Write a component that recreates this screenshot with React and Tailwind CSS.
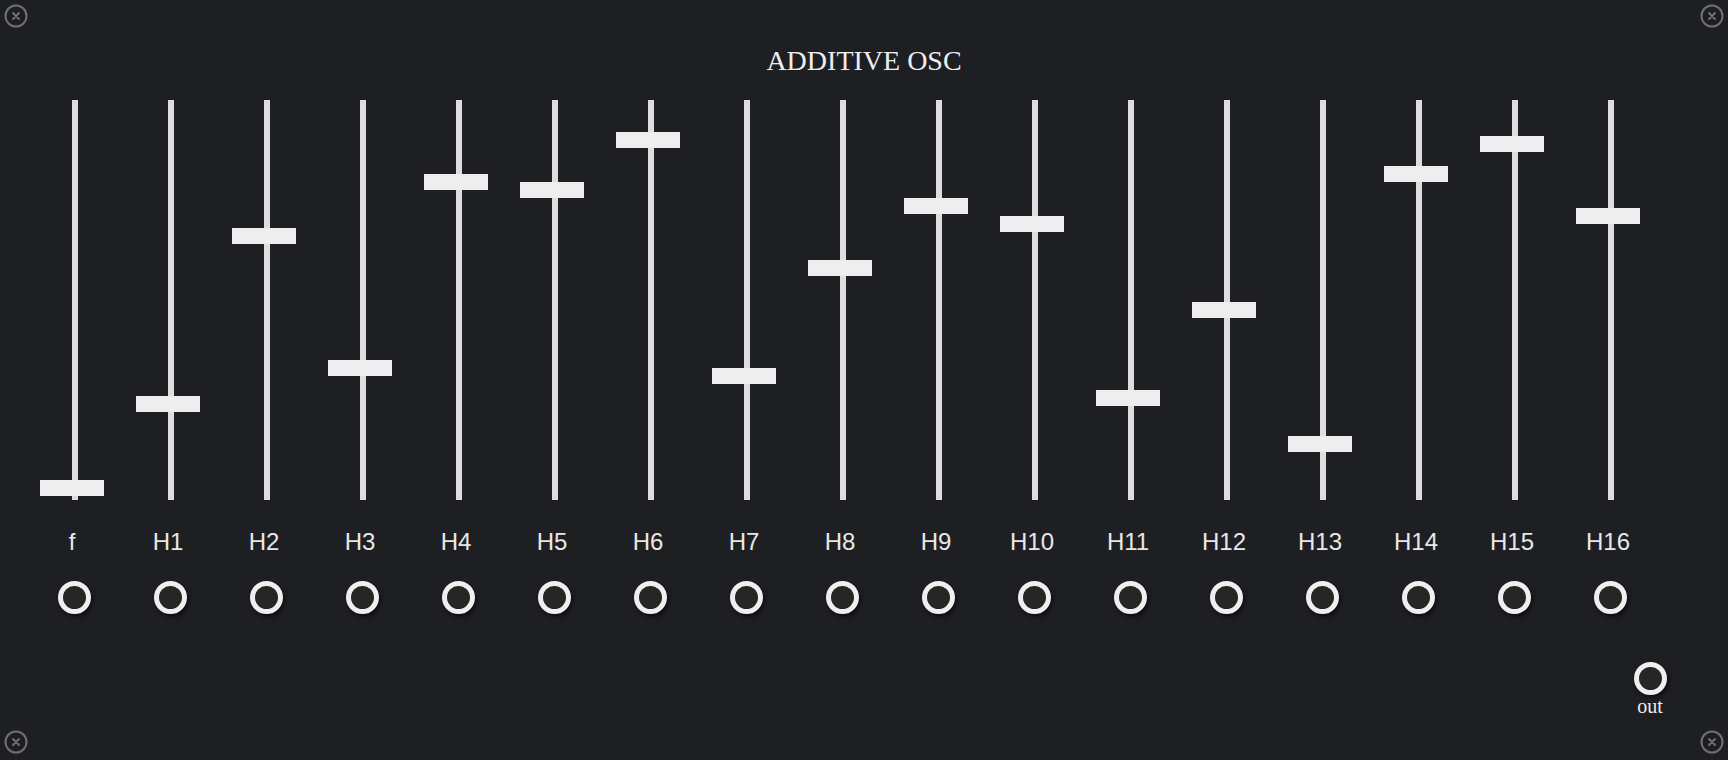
import React from "react";

// thumb top offsets (px from top of the 400px track)
const sliders = [
    { label: "f", top: 380 },
    { label: "H1", top: 296 },
    { label: "H2", top: 128 },
    { label: "H3", top: 260 },
    { label: "H4", top: 74 },
    { label: "H5", top: 82 },
    { label: "H6", top: 32 },
    { label: "H7", top: 268 },
    { label: "H8", top: 160 },
    { label: "H9", top: 98 },
    { label: "H10", top: 116 },
    { label: "H11", top: 290 },
    { label: "H12", top: 202 },
    { label: "H13", top: 336 },
    { label: "H14", top: 66 },
    { label: "H15", top: 36 },
    { label: "H16", top: 108 },
];

function CloseButton({ className }) {
    return (
        <button className={`absolute w-6 h-6 ${className}`}>
            <svg viewBox="0 0 24 24" width="24" height="24">
                <circle cx="12" cy="12" r="10.5" fill="none" stroke="#6f7073" strokeWidth="2" />
                <path d="M9 9 L15 15 M15 9 L9 15" stroke="#6f7073" strokeWidth="2" strokeLinecap="round" />
            </svg>
        </button>
    );
}

function Jack() {
    return (
        <div className="w-[33px] h-[33px] rounded-full border-[5.5px] border-[#efefef] bg-[#272625] shadow-[2px_3px_4px_rgba(0,0,0,0.55)]" />
    );
}

function Slider({ label, top }) {
    return (
        <div className="w-[96px] flex flex-col items-center">
            <div className="relative w-full h-[400px]">
                <div className="absolute left-[48px] top-0 w-[6px] h-full bg-[#dedede]" />
                <div
                    className="absolute left-[16px] w-[64px] h-[16px] bg-[#eeeeee]"
                    style={{ top }}
                />
            </div>
            <div className="mt-[28px] h-[28px] leading-[28px] text-[24px] text-[#e8e8e8] font-['Liberation_Sans',Arial,sans-serif]">
                {label}
            </div>
            <div className="mt-[25px] pl-1">
                <Jack />
            </div>
        </div>
    );
}

export default function App() {
    return (
        <div className="relative w-full h-[760px] bg-[#1e1f23] overflow-hidden">
            <CloseButton className="left-1 top-1" />
            <CloseButton className="right-1 top-1" />
            <CloseButton className="left-1 bottom-1.5" />
            <CloseButton className="right-1 bottom-1.5" />

            <h1 className="pt-[45px] h-[100px] text-center text-[28px] leading-[32px] text-[#eeeeee] font-['Liberation_Serif','Times_New_Roman',serif]">
                ADDITIVE OSC
            </h1>

            <div className="flex pl-[24px]">
                {sliders.map((s) => (
                    <Slider key={s.label} label={s.label} top={s.top} />
                ))}
            </div>

            <div className="flex justify-end pr-[48px] mt-[48px]">
                <div className="w-[60px] flex flex-col items-center">
                    <Jack />
                    <div className="text-[20px] leading-[22px] text-[#eeeeee] font-['Liberation_Serif','Times_New_Roman',serif]">
                        out
                    </div>
                </div>
            </div>
        </div>
    );
}
